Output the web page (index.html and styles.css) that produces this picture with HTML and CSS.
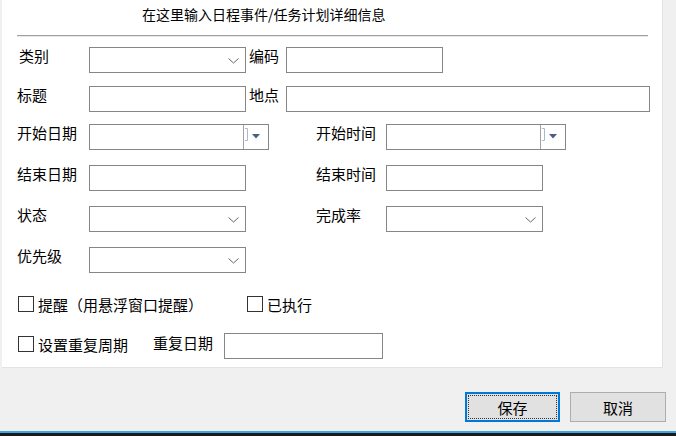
FILE: index.html
```html
<!DOCTYPE html>
<html lang="zh-CN">
<head>
<meta charset="utf-8">
<title>日程事件</title>
<link rel="stylesheet" href="styles.css">
</head>
<body>
<div class="panel">
  <div class="title">在这里输入日程事件/任务计划详细信息</div>
  <div class="rule"></div>

  <div class="row r1">
    <span class="lbl lbl-a shift">类别</span>
    <div class="box combo w157"><svg class="chev" width="11" height="6" viewBox="0 0 11 6"><polyline points="0.5,0.5 5.5,5 10.5,0.5" fill="none" stroke="#666" stroke-width="1"/></svg></div>
    <span class="lbl lbl-b">编码</span>
    <div class="box w157"></div>
  </div>

  <div class="row r2">
    <span class="lbl lbl-a">标题</span>
    <div class="box w157"></div>
    <span class="lbl lbl-b">地点</span>
    <div class="box w364"></div>
  </div>

  <div class="row r3">
    <span class="lbl lbl-a">开始日期</span>
    <div class="box dp">
      <div class="dp-main"></div>
      <div class="dp-btn">
        <svg class="dp-mark" width="4" height="13" viewBox="0 0 4 13"><path d="M0 0.5H2.5V12.5H0" fill="none" stroke="#a9b9d2" stroke-width="1"/></svg>
        <svg class="dp-arrow" width="8" height="5" viewBox="0 0 8 5"><polygon points="0,0 8,0 4,4.5" fill="#4a5d85"/></svg>
      </div>
    </div>
    <span class="lbl lbl-c dp-gap">开始时间</span>
    <div class="box dp">
      <div class="dp-main"></div>
      <div class="dp-btn">
        <svg class="dp-mark" width="4" height="13" viewBox="0 0 4 13"><path d="M0 0.5H2.5V12.5H0" fill="none" stroke="#a9b9d2" stroke-width="1"/></svg>
        <svg class="dp-arrow" width="8" height="5" viewBox="0 0 8 5"><polygon points="0,0 8,0 4,4.5" fill="#4a5d85"/></svg>
      </div>
    </div>
  </div>

  <div class="row r4">
    <span class="lbl lbl-a">结束日期</span>
    <div class="box w157"></div>
    <span class="lbl lbl-c">结束时间</span>
    <div class="box w157"></div>
  </div>

  <div class="row r5">
    <span class="lbl lbl-a">状态</span>
    <div class="box combo w157"><svg class="chev" width="11" height="6" viewBox="0 0 11 6"><polyline points="0.5,0.5 5.5,5 10.5,0.5" fill="none" stroke="#666" stroke-width="1"/></svg></div>
    <span class="lbl lbl-c">完成率</span>
    <div class="box combo w157"><svg class="chev" width="11" height="6" viewBox="0 0 11 6"><polyline points="0.5,0.5 5.5,5 10.5,0.5" fill="none" stroke="#666" stroke-width="1"/></svg></div>
  </div>

  <div class="row r6">
    <span class="lbl lbl-a">优先级</span>
    <div class="box combo w157"><svg class="chev" width="11" height="6" viewBox="0 0 11 6"><polyline points="0.5,0.5 5.5,5 10.5,0.5" fill="none" stroke="#666" stroke-width="1"/></svg></div>
  </div>

  <div class="row rc">
    <label class="opt opt-wide"><span class="check"></span><span class="opt-text">提醒（用悬浮窗口提醒）</span></label>
    <label class="opt"><span class="check"></span><span class="opt-text">已执行</span></label>
  </div>

  <div class="row r8">
    <label class="opt opt-top"><span class="check"></span><span class="opt-text">设置重复周期</span></label>
    <span class="lbl lbl-d">重复日期</span>
    <div class="box w159"></div>
  </div>
</div>

<div class="actions">
  <button class="btn btn-default" type="button"><span class="focus">保存</span></button>
  <button class="btn" type="button">取消</button>
</div>
<div class="taskbar"></div>
</body>
</html>
```

FILE: styles.css
```css
* { box-sizing: border-box; }

html, body {
  margin: 0;
  padding: 0;
}

body {
  width: 676px;
  height: 436px;
  overflow: hidden;
  background: #f0f0f0;
  font-family: "Noto Sans CJK SC", "Microsoft YaHei", sans-serif;
  font-size: 15px;
  color: #000;
}

.panel {
  margin-left: 2px;
  width: 661px;
  height: 368px;
  background: #fff;
  border-right: 1px solid #e3e3e3;
  border-bottom: 1px solid #e3e3e3;
  padding-left: 15px;
  padding-top: 7px;
  overflow: hidden;
}

.title {
  font-size: 14px;
  line-height: 14px;
  height: 14px;
  margin-left: 125px;
  white-space: nowrap;
}

.rule {
  margin-top: 14px;
  width: 631px;
  height: 2px;
  border-top: 1px solid #a0a0a0;
  border-bottom: 1px solid #e8e8e8;
}

.row {
  display: flex;
  align-items: flex-start;
  height: 26px;
}

.r1 { margin-top: 10px; }
.r2 { margin-top: 13px; }
.r3 { margin-top: 12px; }
.r4 { margin-top: 15px; }
.r5 { margin-top: 15px; }
.r6 { margin-top: 15px; }
.rc { margin-top: 23px; height: 16px; align-items: center; }
.r8 { margin-top: 21px; }

.lbl {
  flex: none;
  line-height: 15px;
  margin-top: 1px;
  white-space: nowrap;
}

.lbl-a { width: 72px; }
.lbl-a.shift { padding-left: 2px; }
.lbl-b { width: 37px; margin-left: 3px; }
.lbl-c { width: 70px; margin-left: 70px; }
.lbl-c.dp-gap { margin-left: 47px; }
.lbl-d { width: 71px; margin-left: 24px; margin-top: 2px; }

.box {
  flex: none;
  height: 26px;
  border: 1px solid #868686;
  background: #fff;
}

.w157 { width: 157px; }
.w159 { width: 159px; }
.w364 { width: 364px; }

.combo {
  display: flex;
  justify-content: flex-end;
  align-items: center;
  padding-right: 6px;
  padding-top: 2px;
}

.chev { display: block; }

.dp {
  width: 180px;
  display: flex;
}

.dp-main {
  width: 154px;
  height: 100%;
  border-right: 1px solid #a0a0a0;
}

.dp-btn {
  flex: 1;
  display: flex;
  align-items: flex-start;
  padding-left: 1px;
}

.dp-mark {
  display: block;
  margin-top: 3px;
}

.dp-arrow {
  display: block;
  margin-top: 9px;
  margin-left: 3px;
}

.opt {
  display: flex;
  align-items: center;
  flex: none;
  margin-left: 1px;
}

.opt-wide { width: 228px; }

.opt-top { width: 111px; align-self: flex-start; margin-top: 3px; }

.check {
  display: block;
  flex: none;
  width: 16px;
  height: 16px;
  border: 1px solid #333;
  background: #fff;
}

.opt-text {
  margin-left: 4px;
  line-height: 15px;
  white-space: nowrap;
}

.actions {
  display: flex;
  justify-content: flex-end;
  gap: 10px;
  padding-right: 10px;
  margin-top: 24px;
}

.btn {
  height: 30px;
  width: 96px;
  margin: 0;
  padding: 0;
  background: #e1e1e1;
  border: 1px solid #adadad;
  font-family: inherit;
  font-size: 15px;
  line-height: 15px;
  color: #000;
  display: flex;
  align-items: center;
  justify-content: center;
}

.btn-default {
  width: 95px;
  border: 2px solid #0078d7;
  padding: 1px;
}

.focus {
  width: 100%;
  height: 100%;
  border: 1px dotted #333;
  display: flex;
  align-items: center;
  justify-content: center;
}

.taskbar {
  margin-top: 9px;
  height: 5px;
  border-top: 2px solid #3fa7de;
  background: #1b1b1b;
}
```
